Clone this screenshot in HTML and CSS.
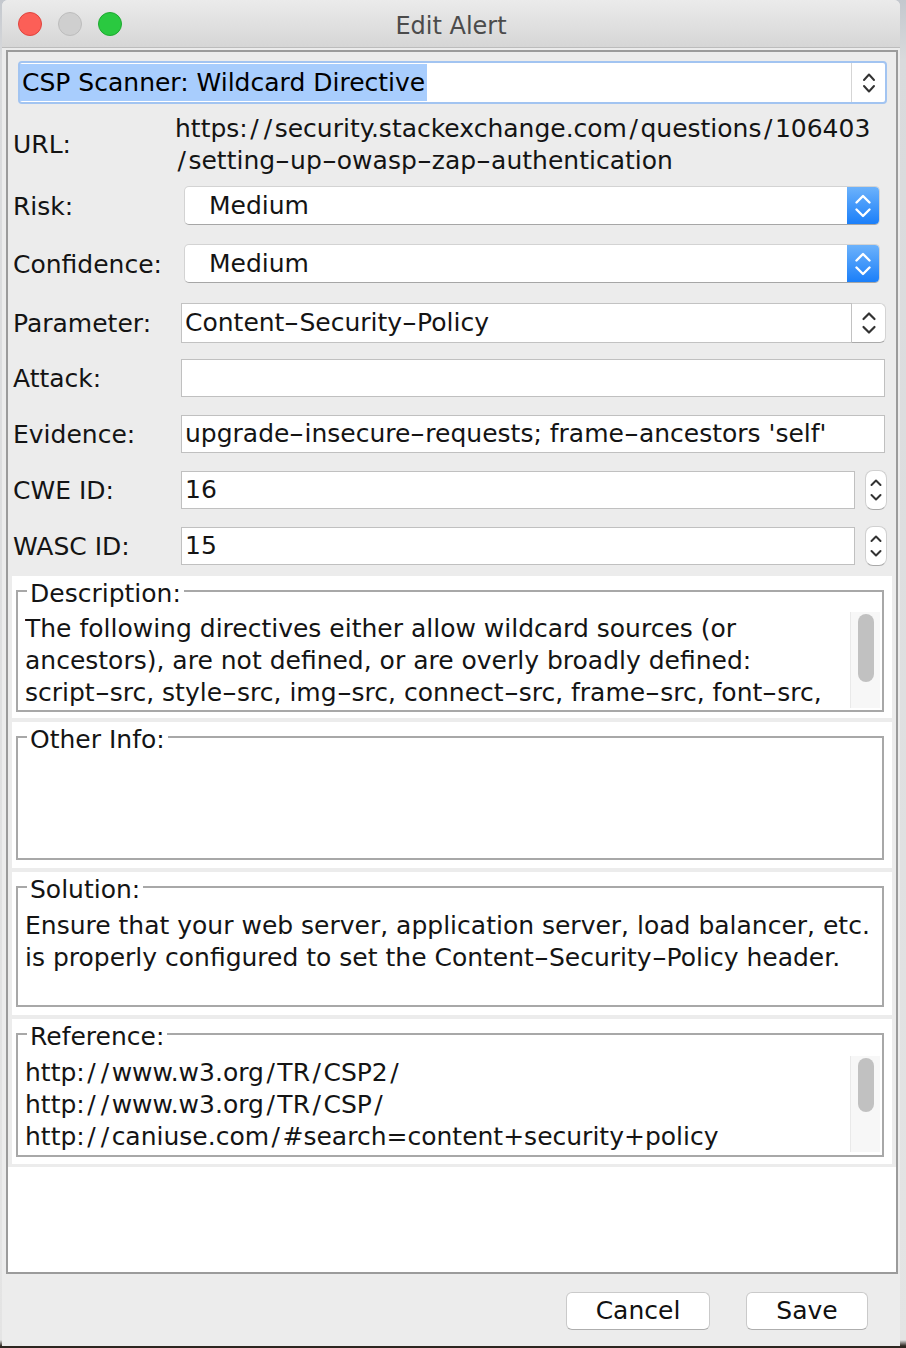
FILE: index.html
```html
<!DOCTYPE html>
<html lang="en">
<head>
<meta charset="utf-8">
<title>Edit Alert</title>
<link rel="stylesheet" href="styles.css">
</head>
<body>
<div class="window">
  <header class="titlebar">
    <div class="lights">
      <span class="light close"></span>
      <span class="light mini"></span>
      <span class="light zoom"></span>
    </div>
    <div class="title">Edit Alert</div>
    <div></div>
  </header>

  <div class="content">
    <div class="scrollpane">
      <div class="form">
        <div class="topcombo">
          <div class="topfield"><span class="sel">CSP Scanner: Wildcard Directive</span></div>
          <div class="toparrow">
            <svg width="16" height="26" viewBox="0 0 16 26"><path d="M3 10 L8 4.5 L13 10 M3 16 L8 21.5 L13 16" fill="none" stroke="#333" stroke-width="2" stroke-linecap="round" stroke-linejoin="round"/></svg>
          </div>
        </div>

        <div class="row url">
          <div class="label">URL:</div>
          <div class="urltext">https:<span class="sl">/</span><span class="sl">/</span>security.stackexchange.com<span class="sl">/</span>questions<span class="sl">/</span>106403<br><span class="sl">/</span>setting<span class="hy">-</span>up<span class="hy">-</span>owasp<span class="hy">-</span>zap<span class="hy">-</span>authentication</div>
        </div>

        <div class="row r-risk">
          <div class="label">Risk:</div>
          <div class="popup">
            <span class="popup-text">Medium</span>
            <span class="popup-arrow">
              <svg width="18" height="28" viewBox="0 0 18 28"><path d="M2.5 10.5 L9 4 L15.5 10.5 M2.5 17.5 L9 24 L15.5 17.5" fill="none" stroke="#fff" stroke-width="2.4" stroke-linecap="round" stroke-linejoin="round"/></svg>
            </span>
          </div>
        </div>

        <div class="row r-conf">
          <div class="label">Confidence:</div>
          <div class="popup">
            <span class="popup-text">Medium</span>
            <span class="popup-arrow">
              <svg width="18" height="28" viewBox="0 0 18 28"><path d="M2.5 10.5 L9 4 L15.5 10.5 M2.5 17.5 L9 24 L15.5 17.5" fill="none" stroke="#fff" stroke-width="2.4" stroke-linecap="round" stroke-linejoin="round"/></svg>
            </span>
          </div>
        </div>

        <div class="row r-param">
          <div class="label">Parameter:</div>
          <div class="editcombo">
            <div class="ec-field">Content<span class="hy">-</span>Security<span class="hy">-</span>Policy</div>
            <div class="ec-arrow">
              <svg width="16" height="28" viewBox="0 0 16 28"><path d="M2.5 10 L8 4.5 L13.5 10 M2.5 18 L8 23.5 L13.5 18" fill="none" stroke="#333" stroke-width="2.2" stroke-linecap="round" stroke-linejoin="round"/></svg>
            </div>
          </div>
        </div>

        <div class="row r-attack">
          <div class="label">Attack:</div>
          <div class="textfield"></div>
        </div>

        <div class="row r-evid">
          <div class="label">Evidence:</div>
          <div class="textfield">upgrade<span class="hy">-</span>insecure<span class="hy">-</span>requests; frame<span class="hy">-</span>ancestors 'self'</div>
        </div>

        <div class="row r-cwe">
          <div class="label">CWE ID:</div>
          <div class="textfield">16</div>
          <div class="spinner">
            <svg width="14" height="34" viewBox="0 0 14 34"><path d="M2.5 12 L7 7.5 L11.5 12 M2.5 22 L7 26.5 L11.5 22" fill="none" stroke="#333" stroke-width="2" stroke-linecap="round" stroke-linejoin="round"/></svg>
          </div>
        </div>

        <div class="row r-wasc">
          <div class="label">WASC ID:</div>
          <div class="textfield">15</div>
          <div class="spinner">
            <svg width="14" height="34" viewBox="0 0 14 34"><path d="M2.5 12 L7 7.5 L11.5 12 M2.5 22 L7 26.5 L11.5 22" fill="none" stroke="#333" stroke-width="2" stroke-linecap="round" stroke-linejoin="round"/></svg>
          </div>
        </div>

        <div class="panel p-desc">
          <fieldset class="box">
            <legend>Description:</legend>
            <div class="box-body">
              <div class="textarea">The following directives either allow wildcard sources (or<br>ancestors), are not defined, or are overly broadly defined:<br>script<span class="hy">-</span>src, style<span class="hy">-</span>src, img<span class="hy">-</span>src, connect<span class="hy">-</span>src, frame<span class="hy">-</span>src, font<span class="hy">-</span>src,</div>
              <div class="vscroll"><div class="thumb"></div></div>
            </div>
          </fieldset>
        </div>

        <div class="panel p-other">
          <fieldset class="box">
            <legend>Other Info:</legend>
            <div class="box-body"></div>
          </fieldset>
        </div>

        <div class="panel p-sol">
          <fieldset class="box">
            <legend>Solution:</legend>
            <div class="box-body">
              <div class="textarea">Ensure that your web server, application server, load balancer, etc.<br>is properly configured to set the Content<span class="hy">-</span>Security<span class="hy">-</span>Policy header.</div>
            </div>
          </fieldset>
        </div>

        <div class="panel p-ref">
          <fieldset class="box">
            <legend>Reference:</legend>
            <div class="box-body">
              <div class="textarea">http:<span class="sl">/</span><span class="sl">/</span>www.w3.org<span class="sl">/</span>TR<span class="sl">/</span>CSP2<span class="sl">/</span><br>http:<span class="sl">/</span><span class="sl">/</span>www.w3.org<span class="sl">/</span>TR<span class="sl">/</span>CSP<span class="sl">/</span><br>http:<span class="sl">/</span><span class="sl">/</span>caniuse.com<span class="sl">/</span>#search=content+security+policy</div>
              <div class="vscroll"><div class="thumb"></div></div>
            </div>
          </fieldset>
        </div>
      </div>
    </div>

    <div class="buttons">
      <button class="btn cancel">Cancel</button>
      <button class="btn save">Save</button>
    </div>
  </div>
</div>
</body>
</html>
```

FILE: styles.css
```css
* { box-sizing: border-box; }

html {
  background: #2d2620;
}

body {
  margin: 0;
  width: 906px;
  height: 1348px;
  background: linear-gradient(to bottom, #c4c8ce 0, #d9dadc 60px, #e4e4e4 1340px, #2d2620 1346px);
  font-family: "DejaVu Sans", "Liberation Sans", sans-serif;
  color: #141414;
  overflow: hidden;
}

.window {
  margin-left: 2px;
  width: 898px;
  height: 1346px;
  background: #ececec;
  border-radius: 6px 6px 0 0;
  overflow: hidden;
  display: flex;
  flex-direction: column;
}

/* title bar */
.titlebar {
  height: 48px;
  flex: none;
  display: grid;
  grid-template-columns: 1fr auto 1fr;
  align-items: center;
  background: linear-gradient(to bottom, #ebebeb, #d6d6d6);
  border-bottom: 1px solid #bcbcbc;
}

.lights {
  display: flex;
  gap: 16px;
  padding-left: 16px;
}

.light {
  width: 24px;
  height: 24px;
  border-radius: 50%;
}

.light.close { background: #fc5f57; border: 1px solid #e0443e; }
.light.mini  { background: #cfcfcf; border: 1px solid #bdbdbd; }
.light.zoom  { background: #2ac940; border: 1px solid #1ea930; }

.title {
  font-size: 24px;
  color: #4b4b4b;
  padding-top: 4px;
}

/* content */
.content {
  flex: 1;
  display: flex;
  flex-direction: column;
}

.scrollpane {
  margin: 2px 2px 0 4px;
  height: 1224px;
  border: 2px solid #9b9b9b;
  background: #fff;
  flex: none;
}

.form {
  background: #ececec;
  padding: 9px 0 3px 0;
  font-size: 25px;
  line-height: 32px;
}

.hy {
  display: inline-block;
  width: 15px;
  text-align: center;
  transform: scaleX(1.7);
}
.sl { padding: 0 2.5px; }

/* top editable combo */
.topcombo {
  margin: 0 9px 0 10px;
  height: 43px;
  display: flex;
  border: 2px solid #a2c4f1;
  border-radius: 4px;
  background: #fff;
}

.topfield {
  flex: 1;
  border-right: 1px solid #d5d5d5;
  padding-top: 1px;
}

.sel {
  display: inline-block;
  height: 37px;
  line-height: 37px;
  padding: 0 2px;
  background: #a8cdfd;
  color: #000;
}

.toparrow {
  width: 33px;
  display: flex;
  align-items: center;
  justify-content: center;
}

/* rows */
.row {
  display: flex;
  align-items: center;
  padding: 0 11px 0 5px;
}

.label {
  width: 168px;
  flex: none;
  white-space: nowrap;
  padding-top: 2px;
}

.url { margin-top: 9px; }
.url .label { padding-top: 0; }
.urltext { margin-left: -6px; white-space: nowrap; }

.r-risk  { margin-top: 9px;  height: 39px; }
.r-conf  { margin-top: 19px; height: 39px; }
.r-param { margin-top: 20px; height: 40px; }
.r-attack{ margin-top: 16px; height: 38px; }
.r-evid  { margin-top: 18px; height: 38px; }
.r-cwe   { margin-top: 18px; height: 38px; }
.r-wasc  { margin-top: 18px; height: 38px; }

/* popup (non-editable) combo */
.popup {
  flex: 1;
  height: 39px;
  margin: 0 5px 0 3px;
  display: flex;
  align-items: center;
  background: #fff;
  border: 1px solid #d3d3d3;
  border-bottom-color: #a6a6a6;
  border-radius: 5px;
  overflow: hidden;
}

.popup-text {
  flex: 1;
  padding-left: 24px;
}

.popup-arrow {
  width: 32px;
  height: 100%;
  display: flex;
  align-items: center;
  justify-content: center;
  background: linear-gradient(to bottom, #6cb2fb, #1b7ff9);
}

/* editable combo */
.editcombo {
  flex: 1;
  height: 40px;
  margin-right: -1px;
  display: flex;
}

.ec-field {
  flex: 1;
  background: #fff;
  border: 1px solid #c2c2c2;
  padding-left: 3px;
  line-height: 38px;
  white-space: nowrap;
}

.ec-arrow {
  width: 34px;
  display: flex;
  align-items: center;
  justify-content: center;
  background: #fff;
  border: 1px solid #d3d3d3;
  border-left: none;
  border-bottom-color: #aaa;
  border-radius: 0 6px 6px 0;
}

/* text fields */
.textfield {
  flex: 1;
  height: 38px;
  background: #fff;
  border: 1px solid #c0c0c0;
  padding-left: 3px;
  line-height: 36px;
  white-space: nowrap;
  overflow: hidden;
}

.spinner {
  width: 22px;
  height: 40px;
  margin: 0 -2px 0 10px;
  flex: none;
  background: #fff;
  border: 1px solid #d0d0d0;
  border-bottom-color: #a9a9a9;
  border-radius: 8px;
  display: flex;
  align-items: center;
  justify-content: center;
}

/* sections */
.panel {
  margin: 0 4px 0 4px;
  background: #fff;
  padding: 0 8px 0 4px;
}

.p-desc  { margin-top: 11px; padding-bottom: 6px; }
.p-other { margin-top: 4px;  padding-bottom: 8px; }
.p-sol   { margin-top: 4px;  padding-bottom: 8px; }
.p-ref   { margin-top: 4px;  padding-bottom: 7px; }

.box {
  margin: 0;
  padding: 0 2px 0 7px;
  border: 2px solid #a8a8a8;
  min-width: 0;
}

.box legend {
  margin-left: 2px;
  padding: 0 3px;
  line-height: 36px;
  height: 30px;
  font-size: 25px;
}

.box-body {
  display: flex;
  overflow: hidden;
}

.p-desc  .box-body { height: 104px; padding: 6px 0 2px 0; }
.p-other .box-body { height: 106px; }
.p-sol   .box-body { height: 103px; padding-top: 7px; }
.p-ref   .box-body { height: 106px; padding: 7px 0 3px 0; }

.textarea {
  flex: 1;
  white-space: nowrap;
  overflow: hidden;
  padding-top: 1px;
  line-height: 32px;
}

.vscroll {
  width: 30px;
  flex: none;
  background: #f7f7f7;
  border-left: 1px solid #e9e9e9;
  padding: 2px 0 0 7px;
}

.thumb {
  width: 16px;
  height: 68px;
  border-radius: 8px;
  background: #c1c1c1;
}

.p-ref .thumb { height: 54px; }

/* buttons */
.buttons {
  flex: 1;
  display: flex;
  justify-content: flex-end;
  align-items: flex-start;
  gap: 36px;
  padding: 18px 32px 0 0;
}

.btn {
  height: 38px;
  background: #fff;
  border: 1px solid #cacaca;
  border-bottom-color: #aeaeae;
  border-radius: 6px;
  font-family: "DejaVu Sans", "Liberation Sans", sans-serif;
  font-size: 25px;
  line-height: 34px;
  color: #111;
  padding: 0;
}

.cancel { width: 144px; }
.save   { width: 122px; }
```
